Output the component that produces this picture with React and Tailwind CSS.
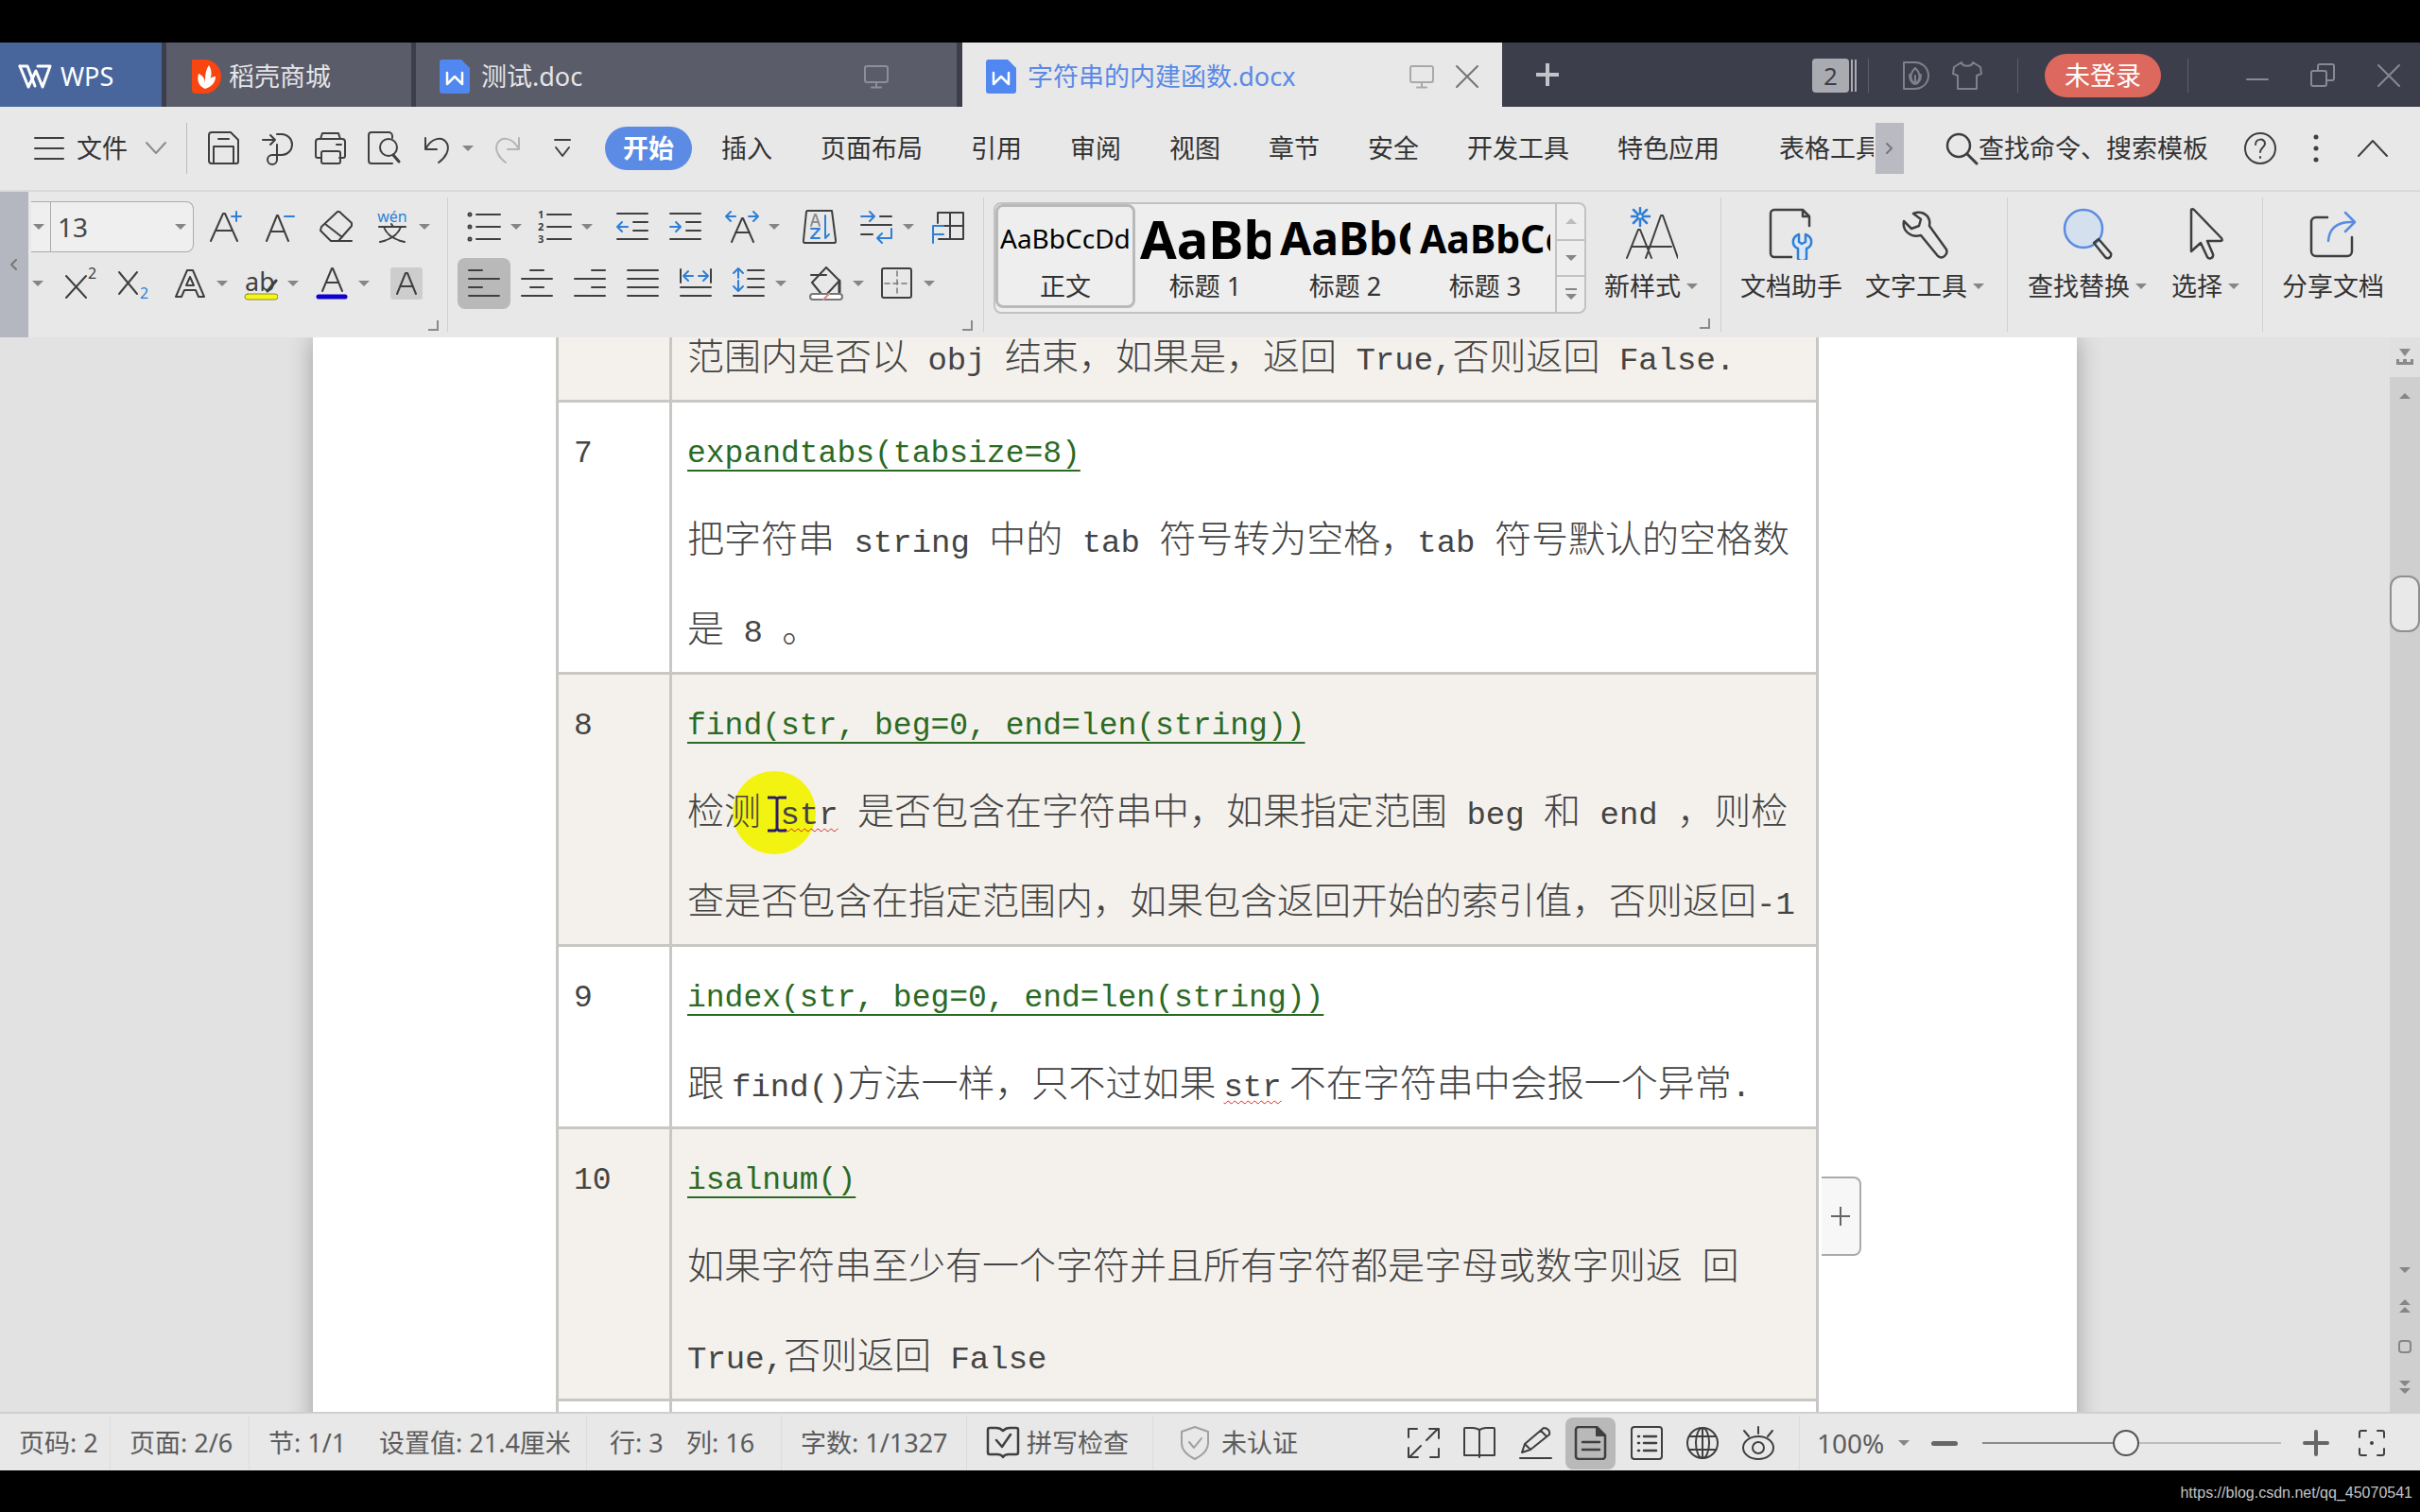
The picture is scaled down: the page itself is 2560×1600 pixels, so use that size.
import React from "react";

const INK = "#3f3f3f";
const BLUE = "#2f7fd6";

function Svg({ w = 36, h = 36, vb, className = "", children, stroke = INK, sw = 2 }) {
  return (
    <svg
      width={w}
      height={h}
      viewBox={vb || `0 0 ${w} ${h}`}
      className={"block shrink-0 " + className}
      fill="none"
      stroke={stroke}
      strokeWidth={sw}
      strokeLinecap="round"
      strokeLinejoin="round"
      aria-hidden="true"
    >
      {children}
    </svg>
  );
}

function Tri({ up = false, color = "#868686" }) {
  return (
    <Svg w={12} h={8} stroke="none">
      <path d={up ? "M0 7h12L6 1z" : "M0 1h12L6 7z"} fill={color} />
    </Svg>
  );
}

/* ---------- title bar ---------- */

function DocIcon() {
  return (
    <Svg w={32} h={36} stroke="none">
      <path d="M3 0h20l9 9v24a3 3 0 0 1-3 3H3a3 3 0 0 1-3-3V3a3 3 0 0 1 3-3z" fill="#5087f0" />
      <path d="M8 14v12l8-8 8 8V14" stroke="#fff" strokeWidth="2.500" fill="none" />
    </Svg>
  );
}

function ScreenIcon({ color }) {
  return (
    <Svg w={26} h={26} stroke={color}>
      <rect x="1" y="2" width="24" height="17" rx="2" />
      <path d="M13 19v5M8 24.500h10" />
    </Svg>
  );
}

function TitleBar() {
  return (
    <header className="flex h-[68px] shrink-0 items-stretch bg-[#3d3e4b] text-[27px] whitespace-nowrap">
      <button className="flex w-[171px] items-center gap-[9px] bg-[#49669c] pt-1 pl-[19px] text-white">
        <Svg w={36} h={26} stroke="#fff" sw={3}>
          <path d="M2 2l9 22 8-17 7 17 8-22H21" />
          <path d="M2 2h8l8 21" />
        </Svg>
        WPS
      </button>
      <button className="ml-[5px] flex w-[259px] items-center gap-[8px] bg-[#5b5c69] pt-1 pl-[27px] text-[#e4e4e8]">
        <Svg w={31} h={36} stroke="none">
          <path d="M0 0h13a18 18 0 0 1 0 36H4a4 4 0 0 1-4-4z" fill="#f9450f" />
          <path d="M14 31c-7-3-9-9-7-16 5 2 7 6 7 11 0-8 0-14 4-20 4 7 3 13-1 19 1-5 4-7 8-7 0 6-4 11-11 13z" fill="#fff" />
        </Svg>
        稻壳商城
      </button>
      <button className="ml-[5px] flex w-[572px] items-center gap-[12px] bg-[#5b5c69] pt-1 pr-[72px] pl-[25px] text-[#e4e4e8]">
        <DocIcon />
        测试.doc
        <span className="ml-auto"><ScreenIcon color="#8d8e99" /></span>
      </button>
      <div className="ml-[6px] flex w-[571px] items-center bg-[#e8e8e8] pt-1 pl-[25px] text-[#5a89e6]">
        <DocIcon />
        <span className="ml-[12px]">字符串的内建函数.docx</span>
        <span className="mr-[22px] ml-auto"><ScreenIcon color="#a9a9a9" /></span>
        <button aria-label="关闭标签" className="mr-[24px]">
          <Svg w={26} h={26} stroke="#747474"><path d="M2 2l22 22M24 2L2 24" /></Svg>
        </button>
      </div>
      <button aria-label="新建标签" className="flex w-[96px] items-center justify-center">
        <Svg w={28} h={28} stroke="#c3c4c9" sw={4}><path d="M14 2v24M2 14h24" strokeLinecap="butt" /></Svg>
      </button>
      <div className="ml-auto flex items-center pt-[2px] pr-[20px]">
        <button className="flex items-center gap-[2px]">
          <span className="flex h-[36px] w-[39px] items-center justify-center rounded-sm bg-[#a9abb1] text-[26px] text-[#3d3e4b]">2</span>
          <span className="h-[34px] w-[2px] bg-[#a9abb1]" />
          <span className="h-[34px] w-[2px] bg-[#a9abb1]" />
        </button>
        <span className="ml-[12px] h-[36px] w-px bg-[#5d5e6a]" />
        <button aria-label="稻壳" className="ml-[36px]">
          <Svg w={28} h={30} stroke="#80818b">
            <path d="M1 1h12a14 14 0 0 1 0 28H1z" />
            <path d="M13 7c6 6 6 12 0 17-6-5-6-11 0-17zM13 24V15M7 14c0 6 2 9 6 10 4-1 6-4 6-10" />
          </Svg>
        </button>
        <button aria-label="皮肤" className="ml-[24px]">
          <Svg w={32} h={30} stroke="#80818b">
            <path d="M10 1c1 5 11 5 12 0l8 5 1 7-5 2v14H6V15l-5-2 1-7z" />
          </Svg>
        </button>
        <span className="ml-[37px] h-[36px] w-px bg-[#5d5e6a]" />
        <button className="ml-[28px] flex h-[46px] w-[123px] items-center justify-center rounded-full bg-[#dc685e] text-white">未登录</button>
        <span className="ml-[28px] h-[36px] w-px bg-[#5d5e6a]" />
        <button aria-label="最小化" className="ml-[61px]">
          <Svg w={24} h={26} stroke="#888993"><path d="M1 17h22" /></Svg>
        </button>
        <button aria-label="还原" className="ml-[44px]">
          <Svg w={26} h={26} stroke="#888993">
            <rect x="1" y="8" width="16" height="16" rx="2" />
            <path d="M8 8V3a2 2 0 0 1 2-2h13a2 2 0 0 1 2 2v13a2 2 0 0 1-2 2h-6" />
          </Svg>
        </button>
        <button aria-label="关闭" className="ml-[44px]">
          <Svg w={26} h={26} stroke="#888993"><path d="M2 2l22 22M24 2L2 24" /></Svg>
        </button>
      </div>
    </header>
  );
}

/* ---------- menu bar ---------- */

const MENUS = ["插入", "页面布局", "引用", "审阅", "视图", "章节", "安全", "开发工具", "特色应用"];

function MenuBar() {
  return (
    <nav className="flex h-[88px] shrink-0 items-center text-[27px] whitespace-nowrap text-[#333]">
      <button className="ml-[36px] flex items-center">
        <Svg w={32} h={26}><path d="M1 2h30M1 13h30M1 24h30" /></Svg>
        <span className="ml-[13px]">文件</span>
        <Svg w={22} h={14} stroke="#8c8c8c" className="ml-[19px]"><path d="M1 1l10 11L21 1" /></Svg>
      </button>
      <span className="ml-[21px] h-[54px] w-px bg-[#bdbdbd]" />
      <button aria-label="保存" className="ml-[21px]">
        <Svg>
          <path d="M5 1h20l8 8v23a2 2 0 0 1-2 2H5a3 3 0 0 1-3-3V4a3 3 0 0 1 3-3z" />
          <path d="M7 34V16h21v18M12 8h11" />
        </Svg>
      </button>
      <button aria-label="输出为PDF" className="ml-[21px]">
        <Svg>
          <path d="M2 9h13M10 4l5 5-5 5M17 3h5a11 11 0 0 1 0 22H12a5 5 0 1 0 5 5V14" />
        </Svg>
      </button>
      <button aria-label="打印" className="ml-[20px]">
        <Svg>
          <path d="M7 8l2-6h17l2 6M8 28H4a2 2 0 0 1-2-2V11a3 3 0 0 1 3-3h25a3 3 0 0 1 3 3v15a2 2 0 0 1-2 2h-4M24 14h5" />
          <rect x="8" y="21" width="20" height="13" rx="2" />
        </Svg>
      </button>
      <button aria-label="打印预览" className="ml-[20px]">
        <Svg>
          <path d="M27 34H5a3 3 0 0 1-3-3V4a3 3 0 0 1 3-3h18a4 4 0 0 1 4 4v2" />
          <circle cx="23" cy="17" r="9" />
          <path d="M28 25l6 7" strokeWidth="3" />
        </Svg>
      </button>
      <button aria-label="撤销" className="ml-[22px] flex items-center gap-[11px]">
        <Svg w={32} h={34}><path d="M4 6v12h12M4 18C10 6 22 3 27 12c3 7-2 15-9 20" /></Svg>
        <Tri />
      </button>
      <button aria-label="恢复" className="ml-[20px]">
        <Svg w={32} h={34} stroke="#b5b5b5"><path d="M28 6v12H16M28 18C22 6 10 3 5 12c-3 7 2 15 9 20" /></Svg>
      </button>
      <button aria-label="自定义" className="ml-[32px]">
        <Svg w={20} h={24}><path d="M2 3h16M3 11l7 9 7-9" /></Svg>
      </button>
      <button className="ml-[35px] flex h-[46px] w-[92px] items-center justify-center rounded-full bg-[#5b8be4] font-bold text-white">开始</button>
      <div className="ml-[31px] flex gap-[51px]">
        {MENUS.map((m) => <button key={m}>{m}</button>)}
        <button className="ml-[12px] w-[100px] overflow-hidden text-left">表格工具</button>
      </div>
      <button aria-label="更多选项卡" className="ml-[2px] flex h-[54px] w-[30px] items-center justify-center bg-[#b9bac2]">
        <Svg w={8} h={14} stroke="#777"><path d="M1 2l5 5-5 5" /></Svg>
      </button>
      <label className="ml-auto flex items-center">
        <Svg><circle cx="15" cy="15" r="12" strokeWidth="2.500" /><path d="M24 24l10 10" strokeWidth="3" /></Svg>
        <input aria-label="查找" placeholder="查找命令、搜索模板" className="w-[250px] bg-transparent outline-none placeholder:text-[#333] placeholder:opacity-100" />
      </label>
      <button aria-label="帮助" className="ml-[30px]">
        <Svg>
          <circle cx="18" cy="18" r="16" />
          <path d="M13 14c0-7 10-7 10-1 0 4-5 4-5 9M18 27v1" />
        </Svg>
      </button>
      <button aria-label="更多" className="ml-[35px]">
        <Svg w={12} h={30} stroke="none"><circle cx="6" cy="3" r="2.500" fill={INK} /><circle cx="6" cy="15" r="2.500" fill={INK} /><circle cx="6" cy="27" r="2.500" fill={INK} /></Svg>
      </button>
      <button aria-label="收起功能区" className="mr-[34px] ml-[38px]">
        <Svg w={32} h={20}><path d="M1 18L16 2l15 16" /></Svg>
      </button>
    </nav>
  );
}

/* ---------- ribbon ---------- */

function Tool({ label, split, active, className = "", children }) {
  return (
    <button aria-label={label} title={label} className={"flex h-[54px] shrink-0 items-center " + className}>
      <span className={"flex h-[54px] w-[56px] items-center justify-center rounded-lg " + (active ? "bg-[#b9b9b9]" : "")}>
        <Svg>{children}</Svg>
      </span>
      {split && <span className="mr-[7px]"><Tri /></span>}
    </button>
  );
}

const Corner = () => (
  <Svg w={14} h={14} stroke="#8a8a8a"><path d="M12 2v10H2" strokeLinecap="butt" strokeLinejoin="miter" /></Svg>
);

const Sep = ({ className = "" }) => <span className={"h-[142px] w-px shrink-0 self-center bg-[#d0d0d0] " + className} />;

function FontGroup() {
  return (
    <section className="flex w-[443px] shrink-0 flex-col pt-[10px]">
      <div className="flex items-center">
        <div className="mr-[6px] ml-[3px] flex h-[54px] w-[172px] items-center rounded-r-lg border border-l-0 border-[#ababab] bg-[#efefef]">
          <button aria-label="字体" className="flex h-full w-[21px] items-center border-r border-[#ababab] pl-[2px]"><Tri /></button>
          <input aria-label="字号" defaultValue="13" className="w-[120px] bg-transparent pl-[7px] text-[28px] text-[#444] outline-none" />
          <button aria-label="字号列表" className="ml-auto pr-[7px]"><Tri /></button>
        </div>
        <Tool label="增大字号">
          <path d="M2 33L15 4h2l13 29M7 22h18" /><path d="M24 7h10M29 2v10" stroke={BLUE} />
        </Tool>
        <Tool label="减小字号">
          <path d="M5 33L16 6h1l11 27M9 23h15" /><path d="M24 7h10" stroke={BLUE} />
        </Tool>
        <Tool label="清除格式" className="ml-[4px]">
          <path d="M13 33L2 22l1-4L20 2h2l13 12v3L21 33zM7 15l18 14M13 33h22" />
        </Tool>
        <Tool label="拼音指南" split className="ml-[4px]">
          <text x="18" y="13" textAnchor="middle" fontSize="16" fill={BLUE} stroke="none">wén</text>
          <path d="M4 18h28M17 15l2 3M9 18c3 9 13 14 22 16M27 18c-3 9-13 14-22 16" />
        </Tool>
      </div>
      <div className="mt-[6px] flex items-center">
        <span className="mr-[11px] ml-[4px]"><Tri /></span>
        <Tool label="上标">
          <path d="M3 10l21 23M24 10L3 33" />
          <text x="26" y="13" fontSize="16" fill={INK} stroke="none">2</text>
        </Tool>
        <Tool label="下标">
          <path d="M3 6l19 23M22 6L3 29" />
          <text x="25" y="34" fontSize="16" fill={BLUE} stroke="none">2</text>
        </Tool>
        <Tool label="文字效果" split className="ml-[4px]">
          <path d="M3 32L15 4h6l12 28h-6l-3-7H12l-3 7zM14 20h8l-4-9z" />
        </Tool>
        <Tool label="突出显示" split>
          <text x="1" y="26" fontSize="27" fill={INK} stroke="none">ab</text>
          <path d="M25 26l9-11" strokeWidth="3" />
          <rect x="1" y="29" width="35" height="6" rx="3" fill="#f6f614" stroke="#8a8a3a" strokeWidth="1" />
        </Tool>
        <Tool label="字体颜色" split>
          <path d="M8 26L18 2h1l10 24M12 17h13" />
          <path d="M4 32h28" stroke="#1000d0" strokeWidth="5" />
        </Tool>
        <Tool label="字符底纹" className="ml-[4px]">
          <rect x="1" y="1" width="34" height="34" rx="3" fill="#cdcdcd" stroke="none" />
          <path d="M8 29L17 7h2l9 22M12 21h13" />
        </Tool>
      </div>
      <div className="mt-[10px] mr-[8px] flex justify-end"><Corner /></div>
    </section>
  );
}

function ParagraphGroup() {
  return (
    <section className="flex w-[566px] shrink-0 flex-col pt-[10px] pl-[10px]">
      <div className="flex items-center">
        <Tool label="项目符号" split>
          <path d="M10 5h25M10 18h25M10 31h25" />
          <circle cx="3" cy="5" r="1.500" /><circle cx="3" cy="18" r="1.500" /><circle cx="3" cy="31" r="1.500" />
        </Tool>
        <Tool label="编号" split>
          <path d="M10 5h25M10 18h25M10 31h25" />
          <g fill={INK} stroke="none" fontSize="11" fontWeight="700"><text x="0" y="9">1</text><text x="0" y="22">2</text><text x="0" y="35">3</text></g>
        </Tool>
        <Tool label="减少缩进" className="ml-[7px]">
          <path d="M2 4h32M19 13h15M19 22h15M2 31h32" /><path d="M13 18H2M7 13l-5 5 5 5" stroke={BLUE} />
        </Tool>
        <Tool label="增加缩进">
          <path d="M2 4h32M19 13h15M19 22h15M2 31h32" /><path d="M2 18h11M8 13l5 5-5 5" stroke={BLUE} />
        </Tool>
        <Tool label="中文版式" split className="ml-[4px]">
          <path d="M7 34L18 9h1l11 25M11 24h15" />
          <path d="M11 7H1M6 2L1 7l5 5M25 7h10M30 2l5 5-5 5" stroke={BLUE} />
        </Tool>
        <Tool label="排序" className="ml-[7px]">
          <path d="M5 1h26l4 31a2 2 0 0 1-2 3H3a2 2 0 0 1-2-3L4 2z" />
          <path d="M9 17l4-12h1l4 12M10 13h7" stroke="#8d8d8d" />
          <path d="M9 20h9L9 30h9M24 6v24l4-4" stroke={BLUE} />
        </Tool>
        <Tool label="显示标记" split className="ml-[4px]">
          <path d="M22 7h12M2 16h32M2 26h12" />
          <path d="M2 7h14M11 2l5 5-5 5M34 20v10H19M24 25l-5 5 5 5" stroke={BLUE} />
        </Tool>
        <Tool label="制表位">
          <path d="M8 14V3h27v28H9M21 3v28M14 17h21" />
          <path d="M3 35V17h11M3 26h11" stroke={BLUE} />
        </Tool>
      </div>
      <div className="mt-[6px] flex items-center">
        <Tool label="左对齐" active><path d="M2 4h14M2 13h32M2 22h14M2 31h32" /></Tool>
        <Tool label="居中"><path d="M11 4h14M2 13h32M11 22h14M2 31h32" /></Tool>
        <Tool label="右对齐"><path d="M20 4h14M2 13h32M20 22h14M2 31h32" /></Tool>
        <Tool label="两端对齐"><path d="M2 4h32M2 13h32M2 22h32M2 31h32" /></Tool>
        <Tool label="分散对齐">
          <path d="M2 3v14M34 3v14M2 22h32M2 31h32" />
          <path d="M15 10H5M10 5l-5 5 5 5M21 10h10M26 5l5 5-5 5" stroke={BLUE} />
        </Tool>
        <Tool label="行距" split>
          <path d="M17 4h17M17 13h17M17 22h17M2 31h32" />
          <path d="M7 12V2M2 7l5-5 5 5M7 15v11M2 21l5 5 5-5" stroke={BLUE} />
        </Tool>
        <Tool label="底纹" split className="ml-[7px]">
          <path d="M12 28L3 17 18 1l14 14-13 14M2 9h16" /><path d="M32 15v12" strokeWidth="3" />
          <rect x="1" y="29" width="34" height="6" rx="3" fill="#fff" stroke="#777" />
          <path d="M15 35l6-6" stroke="#d88" />
        </Tool>
        <Tool label="边框" split>
          <rect x="2" y="2" width="31" height="31" rx="2" />
          <path d="M18 5v26M5 18h26" strokeDasharray="5 4" strokeWidth="1.500" stroke="#777" />
        </Tool>
      </div>
      <div className="mt-[10px] mr-[10px] flex justify-end"><Corner /></div>
    </section>
  );
}

const STYLES = [
  { name: "正文", sample: "AaBbCcDd", cls: "text-[28px]" },
  { name: "标题 1", sample: "AaBb", cls: "text-[56px] font-bold" },
  { name: "标题 2", sample: "AaBbC", cls: "text-[48px] font-bold" },
  { name: "标题 3", sample: "AaBbCc", cls: "text-[41px] font-bold" },
];

function StyleGroup() {
  return (
    <section className="flex shrink-0 items-start pt-[11px] pl-[10px]">
      <div className="flex h-[118px] overflow-hidden rounded-lg border-2 border-[#c2c2c2] bg-[#eeeeee]">
        {STYLES.map((s, i) => (
          <button
            key={s.name}
            className={"flex h-[110px] w-[148px] flex-col items-center overflow-hidden " + (i === 0 ? "rounded-lg border-3 border-[#b9b9b9]" : "pt-[3px]")}
          >
            <span className={"flex h-[66px] w-[138px] items-center overflow-hidden leading-none whitespace-nowrap text-black " + s.cls}>
              <span>{s.sample}</span>
            </span>
            <span className="text-[27px] leading-[36px] text-[#333]">{s.name}</span>
          </button>
        ))}
        <div className="flex w-[31px] flex-col border-l-2 border-[#c2c2c2]">
          <button aria-label="上一行" className="flex flex-1 items-center justify-center border-b-2 border-[#c2c2c2]"><Tri up color="#bdbdbd" /></button>
          <button aria-label="下一行" className="flex flex-1 items-center justify-center border-b-2 border-[#c2c2c2]"><Tri /></button>
          <button aria-label="更多样式" className="flex flex-1 flex-col items-center justify-center gap-[3px]">
            <span className="h-[2px] w-[12px] bg-[#868686]" /><Tri />
          </button>
        </div>
      </div>
    </section>
  );
}

function BigTool({ label, split, className = "", children }) {
  return (
    <button className={"flex shrink-0 flex-col items-center pt-[16px] text-[27px] text-[#333] " + className}>
      <Svg w={56} h={56}>{children}</Svg>
      <span className="mt-[10px] flex items-center gap-[6px] leading-[36px] whitespace-nowrap">
        {label}
        {split && <Tri />}
      </span>
    </button>
  );
}

function Ribbon() {
  return (
    <section className="flex h-[156px] shrink-0 items-stretch border-t-2 border-[#d9d9d9]">
      <button aria-label="向左滚动" className="flex w-[30px] shrink-0 items-center justify-center bg-[#b4b7c0]">
        <Svg w={8} h={14} stroke="#777"><path d="M6 2L1 7l5 5" /></Svg>
      </button>
      <FontGroup />
      <Sep />
      <ParagraphGroup />
      <Sep />
      <StyleGroup />
      <BigTool label="新样式" split className="ml-[19px]">
        <path d="M2 54L14 24h2l12 30M8 42h41M22 54L38 9h2l16 45" />
        <path d="M16 1v6M16 13v7M7 10h6M19 10h7M9 3l5 5M23 3l-5 5M9 17l5-5M23 17l-5-5" stroke={BLUE} strokeWidth="2.500" />
      </BigTool>
      <div className="flex w-[24px] shrink-0 items-end pb-[8px]"><Corner /></div>
      <Sep />
      <BigTool label="文档助手" className="ml-[20px]">
        <path d="M28 53H10a4 4 0 0 1-4-4V7a4 4 0 0 1 4-4h30l7 7v10M40 3v7h7" strokeWidth="2.500" />
        <path d="M36 29c-8 3-8 12-1 15v10c0 4 9 4 9 0V44c7-3 7-12-1-15v8l-4 2-3-2z" fill="#dbe7f5" stroke={BLUE} strokeWidth="2.500" />
      </BigTool>
      <BigTool label="文字工具" split className="ml-[24px]">
        <path d="M16 7c9-4 19 2 17 13l18 25c2 5-4 11-9 7L24 30C13 33 4 25 6 15l8 8 8-3 2-7z" strokeWidth="2.500" />
      </BigTool>
      <Sep className="ml-[24px]" />
      <BigTool label="查找替换" split className="ml-[21px]">
        <circle cx="24" cy="23" r="20" fill="#d5e0ef" stroke="#5b8be4" strokeWidth="2.500" />
        <path d="M35 38l5-4 13 15c1 4-3 7-6 4z" strokeWidth="2.500" />
      </BigTool>
      <BigTool label="选择" split className="ml-[26px]">
        <path d="M13 3v44l10-9 7 15c2 3 7 1 6-3l-6-14h14c2 0 2-1 1-3L16 3c-1-1-3-1-3 0z" strokeWidth="2.500" />
      </BigTool>
      <Sep className="ml-[24px]" />
      <BigTool label="分享文档" className="ml-[20px]">
        <path d="M22 11H10a5 5 0 0 0-5 5v31a5 5 0 0 0 5 5h33a5 5 0 0 0 5-5V32" strokeWidth="2.500" />
        <path d="M23 36c1-13 9-21 27-20M41 6l10 10-10 10" stroke="#5b8be4" strokeWidth="2.500" />
      </BigTool>
    </section>
  );
}

/* ---------- document ---------- */

function Mixed({ text }) {
  return text.split(/([\x20-\x7e]+)/).map((part, i) =>
    /^[\x20-\x7e]+$/.test(part) ? (
      <span key={i} className="font-['Liberation_Mono',monospace] text-[34px]">{part}</span>
    ) : (
      part
    )
  );
}

const Typo = ({ children, className = "" }) => (
  <span className={"font-['Liberation_Mono',monospace] text-[34px] underline decoration-[#d22] decoration-wavy decoration-1 underline-offset-4 " + className}>{children}</span>
);

function Row({ n, link, shaded, children }) {
  return (
    <tr className={shaded ? "bg-[#f4f1ec]" : ""}>
      <td className="w-[120px] border-[3px] border-[#c9c7c4] pl-[16px] align-top leading-[95px]">
        <span className="font-['Liberation_Mono',monospace] text-[33px]">{n}</span>
      </td>
      <td className="relative border-[3px] border-[#c9c7c4] pl-[16px] align-top leading-[95px] whitespace-nowrap">
        {link && (
          <div className="h-[95px]">
            <a href="#" className="font-['Liberation_Mono',monospace] text-[33px] text-[#2b6a24] underline decoration-2 underline-offset-8">{link}</a>
          </div>
        )}
        {children}
      </td>
    </tr>
  );
}

const Line = ({ children }) => <div className="h-[95px]">{children}</div>;

function DocumentArea() {
  return (
    <main className="flex min-h-0 flex-1 overflow-hidden bg-[#e2e2e2]">
      <div className="flex min-w-0 flex-1 items-start justify-center overflow-hidden">
        <article className="flex min-h-full w-[1866px] items-start bg-white pl-[257px] shadow-[0_0_24px_rgba(0,0,0,0.3)]">
          <div className="relative -mt-[32px] w-[1336px]">
            <table className="w-full table-fixed border-collapse text-[39px] font-light text-[#444]">
              <tbody>
                <Row shaded>
                  <Line><Mixed text="范围内是否以 obj 结束，如果是，返回 True,否则返回 False." /></Line>
                </Row>
                <Row n="7" link="expandtabs(tabsize=8)">
                  <Line><Mixed text="把字符串 string 中的 tab 符号转为空格，tab 符号默认的空格数" /></Line>
                  <Line><Mixed text="是 8 。" /></Line>
                </Row>
                <Row n="8" link="find(str, beg=0, end=len(string))" shaded>
                  <span className="absolute top-[102px] left-[64px] size-[88px] rounded-full bg-[#f3f312]" />
                  <div className="relative h-[95px]">
                    <Mixed text="检测 " /><Typo>str</Typo><Mixed text=" 是否包含在字符串中，如果指定范围 beg 和 end ，则检" />
                    <Svg w={22} h={40} stroke="#2a1a6e" sw={3} className="absolute top-[32px] left-[84px]">
                      <path d="M1 3h8l2 1 2-1h8M11 4v32M1 38h8l2-2 2 2h8" strokeLinecap="butt" />
                    </Svg>
                  </div>
                  <Line><Mixed text="查是否包含在指定范围内，如果包含返回开始的索引值，否则返回-1" /></Line>
                </Row>
                <Row n="9" link="index(str, beg=0, end=len(string))">
                  <Line>跟<span className="ml-2"><Mixed text="find()" /></span>方法一样，只不过如果<Typo className="ml-2 pr-2">str</Typo>不在字符串中会报一个异常<Mixed text="." /></Line>
                </Row>
                <Row n="10" link="isalnum()" shaded>
                  <Line><Mixed text="如果字符串至少有一个字符并且所有字符都是字母或数字则返 回" /></Line>
                  <Line><Mixed text="True,否则返回 False" /></Line>
                </Row>
                <Row><Line /></Row>
              </tbody>
            </table>
            <button aria-label="添加列" className="absolute top-[920px] left-full ml-[3px] flex h-[84px] w-[42px] items-center justify-center rounded-r-lg border-2 border-l-0 border-[#ababab] bg-[#f7f7f7]">
              <Svg w={20} h={20} stroke="#666"><path d="M10 0v20M0 10h20" /></Svg>
            </button>
          </div>
        </article>
      </div>
      <div className="flex w-[32px] shrink-0 flex-col items-center bg-[#cfcfcf]">
        <button aria-label="标尺" className="flex h-[42px] w-full items-center justify-center bg-[#e0e0e0]">
          <Svg w={18} h={20} stroke="none"><path d="M3 1h12L9 9zM0 18v-6h3v3h4v-3h4v3h4v-3h3v6z" fill="#8a8a8a" /></Svg>
        </button>
        <button aria-label="向上滚动" className="mt-[16px]"><Tri up /></button>
        <div className="mt-[186px] h-[60px] w-full rounded-xl border-2 border-[#8f8f8f] bg-[#e9e9e9]" />
        <button aria-label="向下滚动" className="mt-auto"><Tri /></button>
        <button aria-label="上一页" className="mt-[26px]"><Tri up /><Tri up /></button>
        <button aria-label="选择浏览对象" className="mt-[28px] h-[14px] w-[14px] rounded-sm border-2 border-[#868686]" />
        <button aria-label="下一页" className="mt-[28px] mb-[18px]"><Tri /><Tri /></button>
      </div>
    </main>
  );
}

/* ---------- status bar ---------- */

function View({ label, active, children }) {
  return (
    <button aria-label={label} className="flex w-[59px] justify-center">
      <span className={"flex h-[55px] w-[53px] items-center justify-center rounded-lg " + (active ? "bg-[#b9b9b9]" : "")}>
        <Svg>{children}</Svg>
      </span>
    </button>
  );
}

const Bar = ({ className = "" }) => <span className={"h-full w-px bg-[#dcdcdc] " + className} />;

function StatusBar() {
  return (
    <footer className="flex h-[62px] shrink-0 items-center border-t-2 border-[#cfcfcf] pt-[2px] text-[27px] whitespace-nowrap text-[#5c5c5c]">
      <span className="ml-[20px] w-[96px]">页码: 2</span>
      <Bar />
      <span className="ml-[20px] w-[126px]">页面: 2/6</span>
      <Bar />
      <span className="ml-[20px] w-[117px]">节: 1/1</span>
      <span className="w-[219px]">设置值: 21.4厘米</span>
      <Bar />
      <span className="ml-[24px] w-[81px]">行: 3</span>
      <span className="w-[100px]">列: 16</span>
      <Bar />
      <span className="ml-[20px] w-[175px]">字数: 1/1327</span>
      <Bar />
      <button className="ml-[20px] flex w-[176px] items-center gap-[7px]">
        <Svg><path d="M18 5c-2-2-4-3-7-3H4a2 2 0 0 0-2 2v24a2 2 0 0 0 2 2h8c3 0 5 1 6 3 1-2 3-3 6-3h8a2 2 0 0 0 2-2V4a2 2 0 0 0-2-2h-7c-3 0-5 1-7 3zM11 15l6 7 9-13" strokeWidth="2.500" /></Svg>
        拼写检查
      </button>
      <Bar />
      <button className="ml-[28px] flex items-center gap-[12px]">
        <Svg w={32} h={36} stroke="#a0a0a0"><path d="M16 1l14 5v12c0 8-6 13-14 17C8 31 2 26 2 18V6zM10 17l5 6 8-10" /></Svg>
        未认证
      </button>
      <div className="ml-auto flex h-full items-center">
        <View label="全屏"><path d="M2 12V3h9M24 3h10v10M33 3L21 15M2 23v10h10M3 33l12-12M34 24v9h-9" /></View>
        <View label="阅读版式"><path d="M18 4v29M18 4c-2-1-4-2-7-2H3a1 1 0 0 0-1 1v28h16M18 4c2-1 4-2 7-2h8a1 1 0 0 1 1 1v28H18" /></View>
        <View label="写作模式"><path d="M2 34h33M4 28l3-9L27 2c4 0 7 3 6 7L13 25zM24 5l6 6M7 19l6 6" /></View>
        <View label="页面视图" active><path d="M5 1h19l9 9v22a3 3 0 0 1-3 3H5a3 3 0 0 1-3-3V4a3 3 0 0 1 3-3zM9 17h18M9 25h18" strokeWidth="2.500" /><path d="M24 1v9h9z" fill={INK} /></View>
        <View label="大纲"><rect x="2" y="1" width="32" height="34" rx="3" /><path d="M9 11h1M15 11h13M9 18h1M15 18h13M15 26h13M9 26h1" strokeWidth="2.500" /></View>
        <View label="Web版式"><circle cx="18" cy="18" r="16" /><ellipse cx="18" cy="18" rx="7" ry="16" /><path d="M18 2v32M4 11h28M4 25h28" /></View>
        <View label="护眼模式"><path d="M18 1v7M3 5l5 6M33 5l-5 6" /><ellipse cx="18" cy="23" rx="16" ry="12" /><circle cx="18" cy="23" r="6" /></View>
        <Bar className="ml-[14px]" />
        <button className="ml-[18px] flex w-[98px] items-center justify-between text-[28px]">100%<Tri /></button>
        <button aria-label="缩小" className="ml-[12px] flex w-[50px] justify-center"><span className="h-[5px] w-[28px] rounded-sm bg-[#666]" /></button>
        <input
          type="range"
          aria-label="显示比例"
          defaultValue="48"
          className="ml-[15px] h-[28px] w-[316px] appearance-none bg-[linear-gradient(to_right,#8a8a8a_50%,#bdbdbd_50%)] bg-[length:100%_2px] bg-center bg-no-repeat [&::-webkit-slider-thumb]:h-[28px] [&::-webkit-slider-thumb]:w-[28px] [&::-webkit-slider-thumb]:appearance-none [&::-webkit-slider-thumb]:rounded-full [&::-webkit-slider-thumb]:border-2 [&::-webkit-slider-thumb]:border-[#555] [&::-webkit-slider-thumb]:bg-[#efefef]"
        />
        <button aria-label="放大" className="ml-[12px] flex w-[50px] justify-center"><Svg w={28} h={28} stroke="#666" sw={4}><path d="M14 2v24M2 14h24" /></Svg></button>
        <button aria-label="适合页面" className="mr-[26px] ml-[9px] flex w-[50px] justify-center">
          <Svg w={30} h={30}><path d="M2 9V4a2 2 0 0 1 2-2h5M21 2h5a2 2 0 0 1 2 2v5M28 21v5a2 2 0 0 1-2 2h-5M9 28H4a2 2 0 0 1-2-2v-5" /><circle cx="15" cy="15" r="1" /></Svg>
        </button>
      </div>
    </footer>
  );
}

export default function App() {
  return (
    <div className="flex h-screen flex-col overflow-hidden bg-black pt-[45px] font-['Noto_Sans','Noto_Sans_CJK_SC',sans-serif]" lang="zh-CN">
      <div className="flex min-h-0 flex-1 flex-col bg-[#e8e8e8]">
        <TitleBar />
        <MenuBar />
        <Ribbon />
        <DocumentArea />
        <StatusBar />
      </div>
      <div className="flex h-[44px] shrink-0 items-center justify-end bg-black pt-[4px] pr-[8px] font-['Liberation_Sans',sans-serif] text-[16px] text-[#c4c4c4]">
        https://blog.csdn.net/qq_45070541
      </div>
    </div>
  );
}
